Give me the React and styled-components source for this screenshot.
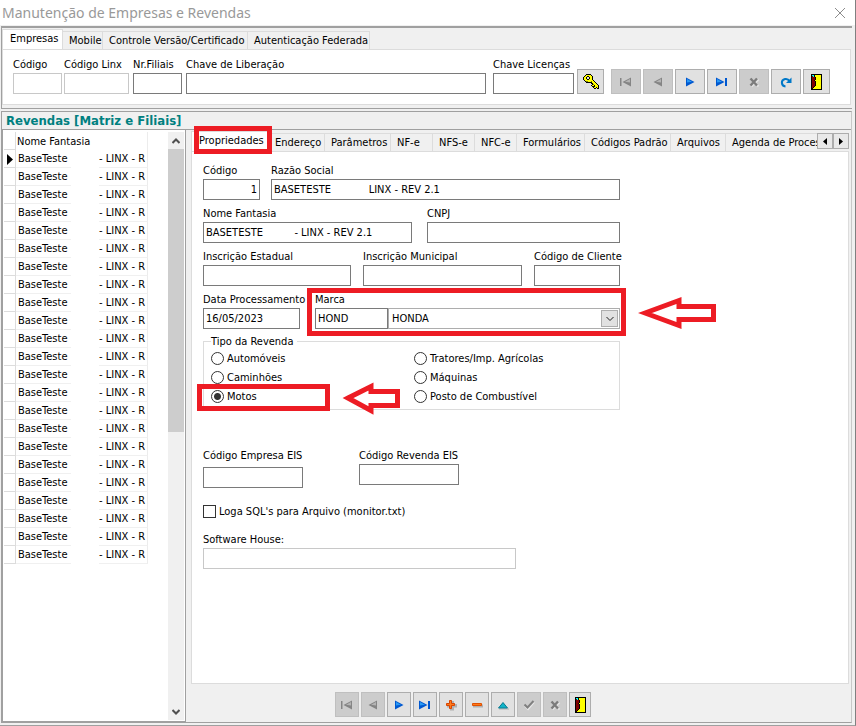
import styled, { createGlobalStyle, css } from "styled-components";

const GlobalStyle = createGlobalStyle`
  * {
    box-sizing: border-box;
  }

  body {
    margin: 0;
    background: #f0f0f0;
  }

  body,
  button,
  input,
  select {
    font-family: "DejaVu Sans Condensed", Tahoma, "Noto Sans", sans-serif;
    font-size: 11px;
    color: #000;
  }
`;

const Window = styled.div`
  display: flex;
  flex-direction: column;
  min-height: 100vh;
  background: #f0f0f0;
  border-right: 1px solid #808080;
  border-bottom: 1px solid #a0a0a0;
`;

const TitleBar = styled.header`
  display: flex;
  align-items: center;
  justify-content: space-between;
  height: 25px;
  padding: 0 9px 0 2px;
  background: #fff;

  h1 {
    margin: 0;
    font-family: "Noto Sans", sans-serif;
    font-size: 14px;
    line-height: 22px;
    font-weight: 400;
    color: #999;
  }
`;

const CloseButton = styled.button`
  display: flex;
  padding: 0;
  border: 0;
  background: none;
`;

const TopPanel = styled.section`
  margin: 1px 3px 0 1px;
  padding: 1px 1px 3px 0;
  border-top: 2px solid #a0a0a0;
  border-bottom: 1px solid #a0a0a0;
  border-left: 1px solid #a0a0a0;
`;

const TabBar = styled.div`
  display: flex;
  align-items: flex-end;
  flex: 1;
  min-width: 0;
  height: 20px;
  overflow: hidden;
`;

const Tab = styled.button`
  flex: none;
  width: ${(props) => props.$width}px;
  height: 18px;
  padding: 0 0 0 6px;
  border: 1px solid #dcdcdc;
  border-width: 1px 1px 0 0;
  background: #f0f0f0;
  line-height: 17px;
  text-align: left;
  white-space: nowrap;

  ${(props) =>
    props.$active &&
    css`
      height: 20px;
      padding: 0 0 2px 7px;
      border-left-width: 1px;
      background: #fff;
    `}
`;

const TabPage = styled.div`
  border: 1px solid #dcdcdc;
  background: #fff;
`;

const CompanyBar = styled(TabPage)`
  display: flex;
  align-items: flex-end;
  gap: 7px;
  padding: 6px 20px 10px 10px;
`;

const Row = styled.div`
  display: flex;
  align-items: ${(props) => props.$align || "flex-start"};
  gap: ${(props) => props.$gap}px;
  ${(props) => props.$grow && "flex: 1; min-width: 0;"}
`;

const FieldBox = styled.div`
  display: flex;
  flex-direction: column;
  gap: ${(props) => props.$gap || 0}px;
  min-width: 0;
  ${(props) =>
    props.$width ? `flex: none; width: ${props.$width}px;` : "flex: 1;"}

  label {
    height: 17px;
    line-height: 17px;
    white-space: nowrap;
  }
`;

const TextInput = styled.input`
  width: 100%;
  height: 21px;
  padding: 0 2px;
  border: 1px solid ${(props) => (props.$pale ? "#c8c8c8" : "#7a7a7a")};
  border-radius: 0;
  background: #fff;
  outline: none;
  text-align: ${(props) => props.$align || "left"};
`;

const ToolButton = styled.button`
  display: flex;
  align-items: center;
  justify-content: center;
  flex: none;
  width: ${(props) => props.$width}px;
  height: 25px;
  padding: 0;
  border: 1px solid #adadad;
  background: #e1e1e1;

  &:disabled {
    border-color: #bfbfbf;
    background: #ccc;
  }
`;

const Section = styled.section`
  display: flex;
  flex-direction: column;
  flex: 1;
  margin: 2px 3px 2px 1px;
  border: 1px solid #a0a0a0;
  border-right-color: #c8c8c8;

  h2 {
    margin: 0;
    padding-left: 4px;
    border-bottom: 1px solid #a0a0a0;
    font-size: 13px;
    line-height: 17px;
    color: #008080;
  }
`;

const Columns = styled.div`
  display: flex;
  flex: 1;
  gap: 4px;
`;

const ListPanel = styled.div`
  display: flex;
  justify-content: space-between;
  flex: none;
  width: 184px;
  padding: 2px 1px 1px 1px;
  border: 1px solid #a0a0a0;
  border-top: 0;
  background: #fff;
`;

const Grid = styled.table`
  align-self: flex-start;
  width: 144px;
  border-collapse: separate;
  border-spacing: 0;
  table-layout: fixed;

  th,
  td {
    height: 18px;
    padding: 1px 0 0;
    font-weight: 400;
    line-height: 16px;
    text-align: left;
    white-space: nowrap;
  }
`;

const Marker = styled.th`
  border-right: 1px solid #dcdcdc;
  border-bottom: 1px solid #dcdcdc;

  svg {
    display: block;
    margin-left: 3px;
  }
`;

const NameCell = styled.td`
  && {
    padding-left: 2px;
  }
  border-bottom: 1px solid #f0f0f0;
`;

const SuffixCell = styled.td`
  border-right: 1px solid #ececec;
  border-bottom: 1px solid #f0f0f0;
`;

const HeaderCell = styled.th`
  border-right: 1px solid #ececec;
  && {
    padding-left: 1px;
  }
`;

const ScrollBar = styled.div`
  display: flex;
  flex-direction: column;
  width: 16px;
  background: #f0f0f0;

  button {
    display: flex;
    align-items: center;
    justify-content: center;
    height: 17px;
    padding: 0;
    border: 0;
    background: none;
  }
`;

const ScrollTrack = styled.div`
  flex: 1;

  &::before {
    content: "";
    display: block;
    height: 51%;
    background: #cdcdcd;
  }
`;

const Detail = styled.div`
  display: flex;
  flex-direction: column;
  flex: 1;
  min-width: 0;
  padding: 1px 2px 0 1px;
`;

const TabLine = styled.div`
  position: relative;
  display: flex;
`;

const TabScroller = styled.button`
  display: flex;
  align-items: center;
  justify-content: center;
  width: 16px;
  height: 16px;
  margin-top: 2px;
  padding: 0;
  border: 1px solid #adadad;
  background: #e9e9e9;
`;

const DetailPage = styled(TabPage)`
  flex: 1;
  padding: 10px 11px;
`;

const Form = styled.form`
  display: flex;
  flex-direction: column;
  gap: 5px;
  max-width: 417px;
`;

const Brand = styled.div`
  position: relative;
  flex: 1;
  display: flex;
  align-items: flex-end;
`;

const SelectBox = styled.div`
  position: relative;
  flex: 1;

  select {
    display: block;
    width: 100%;
    height: 21px;
    padding: 0 3px;
    border: 1px solid #adadad;
    border-radius: 0;
    background: #fff;
    appearance: none;
    outline: none;
  }

  span {
    position: absolute;
    top: 2px;
    right: 2px;
    display: flex;
    align-items: center;
    justify-content: center;
    width: 17px;
    height: 17px;
    border: 1px solid #adadad;
    background: #e1e1e1;
    pointer-events: none;
  }
`;

const TypeGroup = styled.fieldset`
  min-width: 0;
  margin: 0;
  padding: 0 7px 3px;
  border: 1px solid #dcdcdc;

  legend {
    padding: 0 4px 0 0;
    line-height: 15px;
  }

  div {
    display: grid;
    grid-template-rows: repeat(3, 19px);
    grid-template-columns: 203px 1fr;
    grid-auto-flow: column;
  }
`;

const Option = styled.label`
  position: relative;
  display: flex;
  align-items: center;
  gap: 3px;
  height: ${(props) => props.$height}px;
  white-space: nowrap;
`;

const Radio = styled.input`
  width: 13px;
  height: 13px;
  margin: 0;
  border: 1px solid #333;
  border-radius: 50%;
  background: #fff;
  appearance: none;

  &:checked {
    background: radial-gradient(circle, #333 3px, #fff 4px);
  }
`;

const Check = styled.input`
  width: 13px;
  height: 13px;
  margin: 0;
  border: 1px solid #333;
  background: #fff;
  appearance: none;

  &:checked {
    background: #333;
  }
`;

const Lower = styled.div`
  display: flex;
  flex-direction: column;
  gap: ${(props) => props.$gap}px;
  padding-top: ${(props) => props.$top}px;
`;

const Footer = styled.footer`
  display: flex;
  gap: 2px;
  padding: 8px 0 5px 144px;
`;

// red frames drawn over the form to point out a field
const Highlight = styled.i`
  position: absolute;
  inset: ${(props) => props.$inset};
  width: ${(props) => props.$width || "auto"};
  border: 5px solid #ed1c24;
  pointer-events: none;
`;

const PointerArrow = styled.svg`
  position: absolute;
  top: ${(props) => props.$top}px;
  left: ${(props) => props.$left};
  fill: #fff;
  stroke: #ed1c24;
  stroke-width: 5;
`;

const companyTabs = [
  { label: "Empresas", width: 61, active: true },
  { label: "Mobile", width: 40 },
  { label: "Controle Versão/Certificado", width: 145 },
  { label: "Autenticação Federada", width: 122 },
];

const detailTabs = [
  { label: "Propriedades", width: 78, active: true },
  { label: "Endereço", width: 56 },
  { label: "Parâmetros", width: 66 },
  { label: "NF-e", width: 42 },
  { label: "NFS-e", width: 42 },
  { label: "NFC-e", width: 42 },
  { label: "Formulários", width: 68 },
  { label: "Códigos Padrão", width: 86 },
  { label: "Arquivos", width: 55 },
  { label: "Agenda de Processos", width: 120 },
];

const dealerTypes = [
  "Automóveis",
  "Caminhões",
  "Motos",
  "Tratores/Imp. Agrícolas",
  "Máquinas",
  "Posto de Combustível",
];

const dealers = Array.from({ length: 23 }, (_, i) => ({
  id: i,
  name: "BaseTeste",
  suffix: "- LINX - R",
}));

const palette = {
  k: "#000",
  y: "#ffff00",
  o: "#808000",
  r: "#800000",
  c: "#00ffff",
  w: "#e1e1e1",
};

const keyPixels = [
  "...kkkkk........",
  "..kyyyyyk.......",
  ".kyykkyyyk......",
  "kyyk..kyyk......",
  "kyyk..kyyk......",
  "kyyykkyyyk......",
  ".kyyyyyyyyk.....",
  "..kooyyyoyyk....",
  "...kkkkkkyyyk...",
  "........kkyyyk..",
  ".........koyyyk.",
  "........kyykyyyk",
  ".........kkkyyyk",
  "..........kyykyk",
  "...........kk.kk",
  "................",
];

const doorPixels = [
  "kkkkkkkkkkk",
  "kcckyyyyyyk",
  "krckyyyyyyk",
  "krrrkyyyyyk",
  "krrrkyyyyyk",
  "krrrkyyyyyk",
  "krrkyyyyyyk",
  "krrrkyyyyyk",
  "krrrkyyyyyk",
  "krrrkyyyyyk",
  "krrrkyyyyyk",
  "krrrkyyyyyk",
  "krrkyyyyyyk",
  "krkyyyyyyyk",
  "kkyyyyyyyyk",
  "kkkkkkkkkkk",
];

function PixelIcon({ rows }) {
  return (
    <svg width={rows[0].length} height={rows.length} shapeRendering="crispEdges">
      {rows.map((row, y) =>
        [...row].map(
          (c, x) =>
            c !== "." && (
              <rect
                key={`${x}-${y}`}
                x={x}
                y={y}
                width="1"
                height="1"
                fill={palette[c]}
              />
            )
        )
      )}
    </svg>
  );
}

const gray = { dark: "#858585", light: "#b4b4b4" };
const blue = { dark: "#0058d0", light: "#2a9bf5" };

function Triangle({ colors, x, flip }) {
  const transform = flip ? `translate(${x + 8} 0) scale(-1 1)` : `translate(${x} 0)`;
  return (
    <g transform={transform}>
      <path d="M0 3.5 8.5 8 0 12.5z" fill={colors.dark} />
      <path d="M1 5 6 7.7 1 8.5z" fill={colors.light} />
    </g>
  );
}

function NavIcon({ name }) {
  return (
    <svg width="16" height="16" viewBox="0 0 16 16">
      {name === "first" && (
        <>
          <path d="M2 4h1.5v8H2z" fill={gray.dark} />
          <Triangle colors={gray} x={5} flip />
        </>
      )}
      {name === "prior" && <Triangle colors={gray} x={4} flip />}
      {name === "next" && <Triangle colors={blue} x={4} />}
      {name === "last" && (
        <>
          <Triangle colors={blue} x={2} />
          <path d="M11 4h2v8h-2z" fill={blue.dark} />
        </>
      )}
      {name === "insert" && (
        <>
          <path d="M7 4h4v3h3v3.5h-3v3H7v-3H4V7h3z" fill="#b0b0b0" />
          <path d="M6.500 3.500h2v3h3v2h-3v3h-2v-3h-3v-2h3z" fill="#ff7a1a" stroke="#d84400" />
        </>
      )}
      {name === "delete" && (
        <>
          <path d="M4 7.500h10v3H4z" fill="#b0b0b0" />
          <path d="M3.500 6.500h9v2h-9z" fill="#ff7a1a" stroke="#e05000" />
        </>
      )}
      {name === "edit" && (
        <>
          <path d="M4 11.500h10v1H4z" fill="#b0b0b0" />
          <path d="M8 5.500 12.500 11h-9z" fill="#10b4c8" stroke="#087890" />
        </>
      )}
      {name === "post" && (
        <>
          <path d="m4 9 3 3 6-7" fill="none" stroke="#e8e8e8" strokeWidth="2" />
          <path d="m3.500 7.500 3 3 6-6.500" fill="none" stroke="#808080" strokeWidth="2" />
        </>
      )}
      {name === "cancel" && (
        <>
          <path d="m5.500 5.500 7 7m0-7-7 7" stroke="#e4e4e4" strokeWidth="2" />
          <path d="m4.500 4.500 6.500 7m0-7-6.500 7" stroke="#7c7c7c" strokeWidth="2.400" />
        </>
      )}
      {name === "refresh" && (
        <>
          <path d="M7.500 12.500C3 12 2.500 6 7 5c2-.4 3.500.3 4.500 2" fill="none" stroke="#0078c8" strokeWidth="2" />
          <path d="M13.500 3.500v5.500H8z" fill="#0078c8" />
        </>
      )}
    </svg>
  );
}

function Chevron({ up, width = 8, weight = 2, color = "#505050" }) {
  return (
    <svg width={width} height="6" viewBox="0 0 8 6" fill="none" stroke={color} strokeWidth={weight}>
      <path d={up ? "M.5 5 4 1.500 7.500 5" : "M.5 1 4 4.500 7.500 1"} />
    </svg>
  );
}

function Field({ id, label, width, gap, value, pale, align }) {
  return (
    <FieldBox $width={width} $gap={gap}>
      <label htmlFor={id}>{label}</label>
      <TextInput id={id} defaultValue={value} $pale={pale} $align={align} />
    </FieldBox>
  );
}

function Tabs({ items }) {
  return (
    <TabBar role="tablist">
      {items.map((tab) => (
        <Tab
          key={tab.label}
          type="button"
          role="tab"
          aria-selected={!!tab.active}
          $width={tab.width}
          $active={tab.active}
        >
          {tab.label}
        </Tab>
      ))}
    </TabBar>
  );
}

function Navigator({ names, disabled, width, doorWidth }) {
  return (
    <>
      {names.map((name) => (
        <ToolButton
          key={name}
          type="button"
          aria-label={name}
          disabled={disabled.includes(name)}
          $width={width}
        >
          <NavIcon name={name} />
        </ToolButton>
      ))}
      <ToolButton type="button" aria-label="Sair" $width={doorWidth}>
        <PixelIcon rows={doorPixels} />
      </ToolButton>
    </>
  );
}

function CompanyPanel() {
  return (
    <TopPanel>
      <Tabs items={companyTabs} />
      <CompanyBar>
        <Row $gap={4} $grow>
          <Row $gap={2}>
            <Field id="company-code" label="Código" width={49} pale />
            <Field id="linx-code" label="Código Linx" width={65} pale />
          </Row>
          <Field id="branches" label="Nr.Filiais" width={49} />
          <Field id="release-key" label="Chave de Liberação" />
        </Row>
        <Row $gap={3} $align="flex-end">
          <Field id="license-key" label="Chave Licenças" width={81} />
          <ToolButton type="button" aria-label="Chave" $width={27}>
            <PixelIcon rows={keyPixels} />
          </ToolButton>
        </Row>
        <Row $gap={2}>
          <Navigator
            names={["first", "prior", "next", "last", "cancel", "refresh"]}
            disabled={["first", "prior", "cancel"]}
            width={30}
            doorWidth={27}
          />
        </Row>
      </CompanyBar>
    </TopPanel>
  );
}

function DealerList() {
  return (
    <ListPanel>
      <Grid>
        <colgroup>
          <col width="12" />
          <col width="55" />
          <col width="28" />
          <col />
        </colgroup>
        <thead>
          <tr>
            <Marker />
            <HeaderCell colSpan={3}>Nome Fantasia</HeaderCell>
          </tr>
        </thead>
        <tbody>
          {dealers.map((dealer, i) => (
            <tr key={dealer.id}>
              <Marker as="td">
                {i === 0 && (
                  <svg width="6" height="11">
                    <path d="M0 0 6 5.500 0 11z" />
                  </svg>
                )}
              </Marker>
              <NameCell>{dealer.name}</NameCell>
              <td />
              <SuffixCell>{dealer.suffix}</SuffixCell>
            </tr>
          ))}
        </tbody>
      </Grid>
      <ScrollBar>
        <button type="button" aria-label="Subir">
          <Chevron up />
        </button>
        <ScrollTrack />
        <button type="button" aria-label="Descer">
          <Chevron />
        </button>
      </ScrollBar>
    </ListPanel>
  );
}

function DealerForm() {
  return (
    <Form>
      <Row $gap={11}>
        <Field id="code" label="Código" width={57} value="1" align="right" />
        <Field id="legal-name" label="Razão Social" value="BASETESTE            LINX - REV 2.1" />
      </Row>
      <Row $gap={15}>
        <Field id="trade-name" label="Nome Fantasia" width={209} value="BASETESTE          - LINX - REV 2.1" />
        <Field id="cnpj" label="CNPJ" />
      </Row>
      <Row $gap={12}>
        <Field id="state-reg" label="Inscrição Estadual" width={148} />
        <Field id="city-reg" label="Inscrição Municipal" width={159} />
        <Field id="client-code" label="Código de Cliente" />
      </Row>
      <Row $gap={15}>
        <Field id="process-date" label="Data Processamento" width={97} value="16/05/2023" />
        <Brand>
          <Field id="brand" label="Marca" width={73} value="HOND" />
          <SelectBox>
            <select aria-label="Marca">
              <option>HONDA</option>
            </select>
            <span>
              <Chevron width={10} weight={1} color="#202020" />
            </span>
          </SelectBox>
          <Highlight $inset="-3px -6px -7px -8px" />
          <PointerArrow width="80" height="36" $top={4} $left="calc(100% + 18px)">
            <path d="M7 18 41 5.500V11.500H75.500V24.500H41V30.500z" />
          </PointerArrow>
        </Brand>
      </Row>
      <TypeGroup>
        <legend>Tipo da Revenda</legend>
        <div>
          {dealerTypes.map((type) => (
            <Option key={type} $height={19}>
              <Radio type="radio" name="dealer-type" defaultChecked={type === "Motos"} />
              {type}
              {type === "Motos" && (
                <>
                  <Highlight $inset="-3px auto -5px -14px" $width="133px" />
                  <PointerArrow width="62" height="38" $top={-7} $left="130px">
                    <path d="M7 18 30 6.500V11.500H56.500V25.500H30V30.500z" />
                  </PointerArrow>
                </>
              )}
            </Option>
          ))}
        </div>
      </TypeGroup>
      <Lower $top={32} $gap={15}>
        <Row $gap={56}>
          <Field id="company-eis" label="Código Empresa EIS" width={100} gap={3} />
          <Field id="dealer-eis" label="Código Revenda EIS" width={100} />
        </Row>
        <Option $height={17}>
          <Check type="checkbox" />
          Loga SQL's para Arquivo (monitor.txt)
        </Option>
      </Lower>
      <Lower $top={6} $gap={0}>
        <Row $gap={0}>
          <Field id="software-house" label="Software House:" width={313} pale />
        </Row>
      </Lower>
    </Form>
  );
}

export default function App() {
  return (
    <>
      <GlobalStyle />
      <Window>
        <TitleBar>
          <h1>Manutenção de Empresas e Revendas</h1>
          <CloseButton type="button" aria-label="Fechar">
            <svg width="12" height="12" stroke="#8c8c8c" fill="none">
              <path d="m1 1 10 10M11 1 1 11" />
            </svg>
          </CloseButton>
        </TitleBar>
        <CompanyPanel />
        <Section>
          <h2>Revendas [Matriz e Filiais]</h2>
          <Columns>
            <DealerList />
            <Detail>
              <TabLine>
                <Tabs items={detailTabs} />
                <TabScroller type="button" aria-label="Anterior">
                  <svg width="4" height="7">
                    <path d="M4 0v7L0 3.500z" />
                  </svg>
                </TabScroller>
                <TabScroller type="button" aria-label="Próxima">
                  <svg width="4" height="7">
                    <path d="M0 0v7L4 3.500z" />
                  </svg>
                </TabScroller>
                <Highlight $inset="-5px auto -3px 3px" $width="78px" />
              </TabLine>
              <DetailPage>
                <DealerForm />
              </DetailPage>
              <Footer>
                <Navigator
                  names={["first", "prior", "next", "last", "insert", "delete", "edit", "post", "cancel"]}
                  disabled={["first", "prior", "post", "cancel"]}
                  width={24}
                  doorWidth={22}
                />
              </Footer>
            </Detail>
          </Columns>
        </Section>
      </Window>
    </>
  );
}
